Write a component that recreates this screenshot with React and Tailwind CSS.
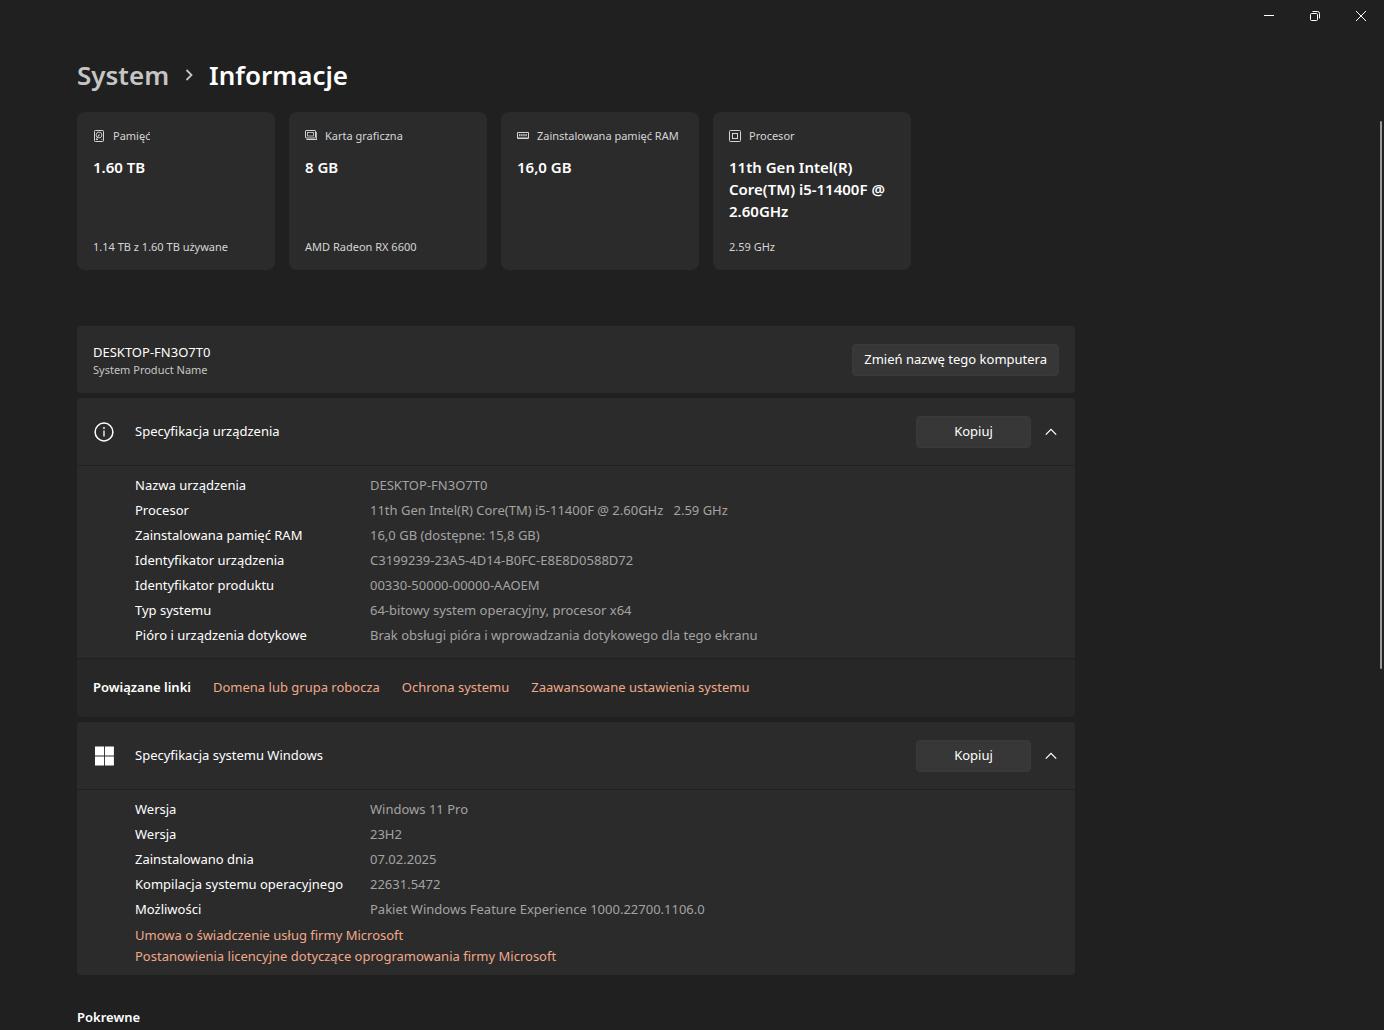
import { useState } from "react";

const cards = [
    { icon: "disk", label: "Pamięć", value: "1.60 TB", note: "1.14 TB z 1.60 TB używane" },
    { icon: "gpu", label: "Karta graficzna", value: "8 GB", note: "AMD Radeon RX 6600" },
    { icon: "ram", label: "Zainstalowana pamięć RAM", value: "16,0 GB", note: "" },
    { icon: "cpu", label: "Procesor", value: "11th Gen Intel(R) Core(TM) i5-11400F @ 2.60GHz", note: "2.59 GHz" },
];

const deviceRows = [
    ["Nazwa urządzenia", "DESKTOP-FN3O7T0"],
    ["Procesor", "11th Gen Intel(R) Core(TM) i5-11400F @ 2.60GHz   2.59 GHz"],
    ["Zainstalowana pamięć RAM", "16,0 GB (dostępne: 15,8 GB)"],
    ["Identyfikator urządzenia", "C3199239-23A5-4D14-B0FC-E8E8D0588D72"],
    ["Identyfikator produktu", "00330-50000-00000-AAOEM"],
    ["Typ systemu", "64-bitowy system operacyjny, procesor x64"],
    ["Pióro i urządzenia dotykowe", "Brak obsługi pióra i wprowadzania dotykowego dla tego ekranu"],
];

const windowsRows = [
    ["Wersja", "Windows 11 Pro"],
    ["Wersja", "23H2"],
    ["Zainstalowano dnia", "07.02.2025"],
    ["Kompilacja systemu operacyjnego", "22631.5472"],
    ["Możliwości", "Pakiet Windows Feature Experience 1000.22700.1106.0"],
];

const relatedLinks = ["Domena lub grupa robocza", "Ochrona systemu", "Zaawansowane ustawienia systemu"];

const CardIcon = ({ name }) => (
    <svg className="size-3 shrink-0" viewBox="0 0 12 12" fill="none" stroke="currentColor" aria-hidden="true">
        {name === "disk" && (
            <>
                <rect x="1.5" y="0.5" width="9" height="11" rx="0.8" />
                <circle cx="6" cy="5" r="2.9" strokeWidth="0.9" />
                <circle cx="6" cy="5" r="0.7" fill="currentColor" stroke="none" />
                <path d="M6 5 3.2 9.4M3 9.5h2M8.5 9.5h.8" strokeWidth="0.9" />
            </>
        )}
        {name === "gpu" && (
            <>
                <rect x="0.5" y="0.5" width="10" height="7.5" rx="0.6" />
                <rect x="2.5" y="2.5" width="6" height="3.5" strokeWidth="0.8" />
                <path d="M1.5 9.5h10.5M11.7 2v7.5" />
            </>
        )}
        {name === "ram" && (
            <>
                <path d="M0.5 2.5h11v6h-11z" />
                <path d="M2.8 4v2.2M4.9 4v2.2M7 4v2.2M9.1 4v2.2" strokeWidth="1.2" />
                <path d="M1.5 7.5h9" strokeDasharray="1 1" />
            </>
        )}
        {name === "cpu" && (
            <>
                <rect x="0.5" y="0.5" width="11" height="11" rx="1" />
                <rect x="3.5" y="3.5" width="5" height="5" />
            </>
        )}
    </svg>
);

const InfoIcon = () => (
    <svg className="size-5" viewBox="0 0 20 20" fill="none" stroke="currentColor" aria-hidden="true">
        <circle cx="10" cy="10" r="8.9" strokeWidth="1.5" />
        <path d="M10 8.5v6" strokeWidth="1.3" />
        <circle cx="10" cy="6" r="0.9" fill="currentColor" stroke="none" />
    </svg>
);

const WindowsIcon = () => (
    <svg className="size-5" viewBox="0 0 20 20" fill="currentColor" aria-hidden="true">
        <path d="M1 0.5h9v9H1zM10.9 0.5h9v9h-9zM1 10.4h9v9H1zM10.9 10.4h9v9h-9z" />
    </svg>
);

const WindowButton = ({ label, children }) => (
    <button type="button" aria-label={label} className="flex h-8 w-[46px] items-center justify-center hover:bg-[#2d2d2d]">
        <svg className="size-3" viewBox="0 0 12 12" fill="none" stroke="currentColor">
            {children}
        </svg>
    </button>
);

const Button = ({ className, children }) => (
    <button
        type="button"
        className={`h-8 rounded border border-[#3a3a3a] bg-[#373737] px-[11px] text-[13px] text-white hover:bg-[#3d3d3d] ${className}`}>
        {children}
    </button>
);

const SpecTable = ({ rows }) => (
    <table className="mb-0.5 w-full text-left leading-[25px]">
        <tbody>
            {rows.map(([name, value]) => (
                <tr key={name + value}>
                    <th scope="row" className="w-[235px] p-0 font-normal text-white">{name}</th>
                    <td className="whitespace-pre-wrap p-0 text-[#a3a3a3]">{value}</td>
                </tr>
            ))}
        </tbody>
    </table>
);

const SpecSection = ({ icon, title, footer, children }) => {
    const [open, setOpen] = useState(true);

    return (
        <section className="overflow-hidden rounded bg-[#2b2b2b]">
            <div className="flex h-[67px] items-center pl-[17px] pr-2">
                {icon}
                <h2 className="ml-[21px] flex-1 text-white">{title}</h2>
                <Button className="w-[115px]">Kopiuj</Button>
                <button
                    type="button"
                    aria-label={title}
                    aria-expanded={open}
                    onClick={() => setOpen(!open)}
                    className="ml-1 flex size-8 items-center justify-center rounded text-white">
                    <svg className={open ? "size-3" : "size-3 rotate-180"} viewBox="0 0 12 12" fill="none" stroke="currentColor" strokeWidth="1.3">
                        <path d="M0.8 8.6 6 3.4l5.2 5.2" />
                    </svg>
                </button>
            </div>
            {open && (
                <>
                    <div className="border-t border-[#202020] pb-2 pl-[58px] pr-4 pt-[7px]">{children}</div>
                    {footer}
                </>
            )}
        </section>
    );
};

const App = () => {
    return (
        <div className="relative min-h-screen bg-[#202020] font-['Noto_Sans','Open_Sans',sans-serif] text-[13px] text-white">
            <header className="flex h-8 justify-end">
                <WindowButton label="Minimalizuj"><path d="M1 5.5h10" /></WindowButton>
                <WindowButton label="Przywróć">
                    <rect x="1.5" y="3.5" width="7" height="7" rx="1" />
                    <path d="M3.5 1.5h5a2 2 0 0 1 2 2v5" />
                </WindowButton>
                <WindowButton label="Zamknij"><path d="m1 1 10 10M11 1 1 11" /></WindowButton>
            </header>

            <main className="px-[77px]">
                <nav className="flex h-20 items-center pt-1.5 text-[26px] font-semibold">
                    <a href="#system" className="text-[#c5c5c5] hover:text-white">System</a>
                    <svg className="mx-[14px] size-3" viewBox="0 0 12 12" fill="none" stroke="#c5c5c5" strokeWidth="1.8" aria-hidden="true">
                        <path d="m3.5 1 5 5-5 5" />
                    </svg>
                    <h1>Informacje</h1>
                </nav>

                <div className="flex flex-wrap gap-[14px]">
                    {cards.map((card) => (
                        <div key={card.label} className="flex h-[158px] w-[198px] flex-col rounded-lg bg-[#2b2b2b] px-4 pb-[15px] pt-4">
                            <div className="mb-3 flex items-center gap-2 text-[11px] leading-4 text-[#d6d6d6]">
                                <CardIcon name={card.icon} />
                                <span className="overflow-hidden whitespace-nowrap">{card.label}</span>
                            </div>
                            <p className="text-[15px] font-semibold leading-[22px]">{card.value}</p>
                            <p className="mt-auto text-[11px] leading-4 text-[#d6d6d6]">{card.note}</p>
                        </div>
                    ))}
                </div>

                <div className="mt-14 flex max-w-[998px] flex-col gap-[5px]">
                    <section className="flex h-[67px] items-center justify-between rounded bg-[#2b2b2b] px-4">
                        <div>
                            <h2 className="leading-5">DESKTOP-FN3O7T0</h2>
                            <p className="text-[11px] leading-4 text-[#c5c5c5]">System Product Name</p>
                        </div>
                        <Button>Zmień nazwę tego komputera</Button>
                    </section>

                    <SpecSection
                        icon={<InfoIcon />}
                        title="Specyfikacja urządzenia"
                        footer={
                            <div className="flex h-[59px] items-center gap-[22px] border-t border-[#202020] bg-[#272727] px-4">
                                <h3 className="font-semibold">Powiązane linki</h3>
                                {relatedLinks.map((link) => (
                                    <a key={link} href="#link" className="text-[#f0a98a] hover:underline">{link}</a>
                                ))}
                            </div>
                        }>
                        <SpecTable rows={deviceRows} />
                    </SpecSection>

                    <SpecSection icon={<WindowsIcon />} title="Specyfikacja systemu Windows">
                        <SpecTable rows={windowsRows} />
                        <div className="flex flex-col items-start pt-px leading-[21px] text-[#f0a98a]">
                            <a href="#umowa" className="hover:underline">Umowa o świadczenie usług firmy Microsoft</a>
                            <a href="#licencja" className="hover:underline">Postanowienia licencyjne dotyczące oprogramowania firmy Microsoft</a>
                        </div>
                    </SpecSection>
                </div>

                <h2 className="mt-8 font-semibold leading-5">Pokrewne</h2>
            </main>

            {/* scrollbar thumb */}
            <div className="absolute right-0.5 top-[121px] h-[548px] w-0.5 rounded-full bg-[#9a9a9a]" />
        </div>
    );
};

export default App;
